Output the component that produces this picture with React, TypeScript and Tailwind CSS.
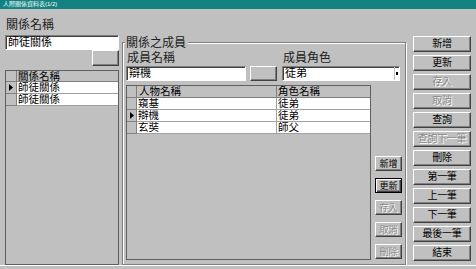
import React from "react";

const RAISED =
  "flex items-center justify-center bg-[#c0c0c0] border border-t-white border-l-white border-r-[#404040] border-b-[#404040] shadow-[inset_-1px_-1px_0_#808080]";
const FOCUSED =
  "flex items-center justify-center bg-[#c0c0c0] border border-black shadow-[inset_1px_1px_0_#fff,inset_-1px_-1px_0_#404040,inset_-2px_-2px_0_#808080]";
const SUNKEN =
  "bg-white border border-t-[#808080] border-l-[#808080] border-r-white border-b-white shadow-[inset_1px_1px_0_#404040]";
const DIS = "text-[#8a8a8a] [text-shadow:1px_1px_0_#fff]";

function Btn({
  label,
  disabled,
  focused,
  className,
}: {
  label?: string;
  disabled?: boolean;
  focused?: boolean;
  className: string;
}) {
  return (
    <div className={`${focused ? FOCUSED : RAISED} ${className}`}>
      {label && <span className={disabled ? DIS : "text-black"}>{label}</span>}
    </div>
  );
}

function Arrow() {
  return (
    <svg width="4" height="7" viewBox="0 0 4 7" className="block">
      <path d="M0 0 L4 3.5 L0 7 Z" fill="#000" />
    </svg>
  );
}

export default function App() {
  const rightButtons: { label: string; disabled?: boolean }[] = [
    { label: "新增" },
    { label: "更新" },
    { label: "存入", disabled: true },
    { label: "取消", disabled: true },
    { label: "查詢" },
    { label: "查詢下一筆", disabled: true },
    { label: "刪除" },
    { label: "第一筆" },
    { label: "上一筆" },
    { label: "下一筆" },
    { label: "最後一筆" },
    { label: "結束" },
  ];
  const members = [
    { name: "窺基", role: "徒弟", cur: false },
    { name: "辯機", role: "徒弟", cur: true },
    { name: "玄奘", role: "師父", cur: false },
  ];
  const cell = "overflow-hidden flex items-center";
  return (
    <div className="w-[476px] h-[269px] bg-[#c0c0c0] overflow-hidden flex flex-col font-['Liberation_Sans','Noto_Sans_CJK_TC','Noto_Sans_CJK_SC',sans-serif] text-black">
      {/* title bar */}
      <div className="h-[9px] bg-[#128282] text-white text-[6px] leading-[9px] pl-[3px] whitespace-nowrap">
        人際關係資料表(1/2)
      </div>

      <div className="flex h-[256px]">
        {/* left column */}
        <div className="ml-[5px] w-[114px] flex flex-col">
          <div className="mt-[9px] h-[14px] text-[12px] leading-[14px] pl-[1px] text-[#202020]">關係名稱</div>
          <div className={`mt-[3px] h-[15px] ${SUNKEN} text-[11px] leading-[13px] pl-[2px] ${cell}`}>師徒關係</div>
          <Btn className="ml-auto w-[27px] h-[16px]" />
          <div className="mt-[4px] h-[195px] border border-[#606060] bg-[#c0c0c0] flex flex-col text-[10.5px] leading-[11px]">
            <div className="flex h-[11px]">
              <div className="w-[11px] border-r border-b border-[#808080]" />
              <div className={`flex-1 border-b border-[#808080] pl-[1px] ${cell}`}>關係名稱</div>
            </div>
            {[true, false].map((cur, i) => (
              <div key={i} className="flex h-[12px]">
                <div className="w-[11px] border-r border-b border-[#808080] flex items-center justify-center">
                  {cur && <Arrow />}
                </div>
                <div className={`flex-1 bg-white border-b border-[#a0a0a0] pl-[1px] ${cell}`}>師徒關係</div>
              </div>
            ))}
          </div>
        </div>

        {/* middle group box */}
        <div className="ml-[3px] mt-[33px] w-[284px] h-[223px] relative border border-[#808080] shadow-[inset_1px_1px_0_#fff,1px_1px_0_#fff] flex flex-col">
          <div className="absolute top-[-7px] left-[2px] pl-[1px] pr-[2px] bg-[#c0c0c0] text-[12px] leading-[14px] whitespace-nowrap text-[#202020]">
            關係之成員
          </div>
          <div className="flex pt-[8px] pl-[3px]">
            <div className="w-[156px] flex flex-col">
              <div className="h-[14px] text-[12px] leading-[14px] pl-[1px] text-[#202020]">成員名稱</div>
              <div className="mt-[1px] flex">
                <div className={`w-[120px] h-[15px] ${SUNKEN} text-[11px] leading-[13px] pl-[2px] ${cell}`}>辯機</div>
                <Btn className="ml-[4px] w-[27px] h-[15px]" />
              </div>
            </div>
            <div className="w-[118px] flex flex-col">
              <div className="h-[14px] text-[12px] leading-[14px] pl-[1px] text-[#202020]">成員角色</div>
              <div className={`mt-[1px] h-[15px] ${SUNKEN} flex text-[11px] leading-[13px]`}>
                <div className="flex-1 pl-[2px] flex items-center">徒弟</div>
                <div className="w-[5px] border-l border-[#c0c0c0] flex items-center justify-center">
                  <div className="w-[2px] h-[3px] bg-black" />
                </div>
              </div>
            </div>
          </div>

          <div className="flex mt-[4px] pl-[3px]">
            <div className="w-[245px] h-[175px] border border-[#606060] bg-[#c0c0c0] flex flex-col text-[10.5px] leading-[11px]">
              <div className="flex h-[12px]">
                <div className="w-[10px] border-r border-b border-[#808080]" />
                <div className={`w-[140px] border-r border-b border-[#808080] pl-[2px] ${cell}`}>人物名稱</div>
                <div className={`flex-1 border-b border-[#808080] pl-[1px] ${cell}`}>角色名稱</div>
              </div>
              {members.map((m) => (
                <div key={m.name} className="flex h-[12px]">
                  <div className="w-[10px] border-r border-b border-[#808080] flex items-center justify-center">
                    {m.cur && <Arrow />}
                  </div>
                  <div className={`w-[140px] bg-white border-r border-b border-[#a0a0a0] pl-[1px] ${cell}`}>{m.name}</div>
                  <div className={`flex-1 bg-white border-b border-[#a0a0a0] pl-[1px] ${cell}`}>{m.role}</div>
                </div>
              ))}
            </div>
            <div className="ml-[4px] w-[27px] flex flex-col justify-end gap-[7px] pb-[1px] text-[9px] leading-[10px]">
              <Btn label="新增" className="h-[15px]" />
              <Btn label="更新" focused className="h-[15px]" />
              <Btn label="存入" disabled className="h-[15px]" />
              <Btn label="取消" disabled className="h-[15px]" />
              <Btn label="刪除" disabled className="h-[15px]" />
            </div>
          </div>
        </div>

        {/* right column */}
        <div className="ml-[7px] w-[58px] pt-[27px] flex flex-col gap-[3px] text-[10px] leading-[12px]">
          {rightButtons.map((b) => (
            <Btn
              key={b.label}
              label={b.label}
              disabled={b.disabled}
              className="h-[16px] whitespace-nowrap overflow-hidden tracking-[-0.3px]"
            />
          ))}
        </div>
      </div>
      <div className="h-[1px] bg-white" />
    </div>
  );
}
